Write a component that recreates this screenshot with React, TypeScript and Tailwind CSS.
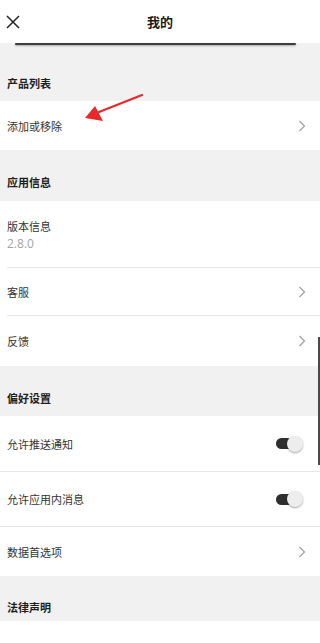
import React from "react";

const font = { fontFamily: '"Noto Sans CJK SC", "Noto Sans", sans-serif' };

function Chevron() {
  return (
    <svg width="8" height="12" viewBox="0 0 8 12" className="mr-[14px]">
      <path d="M1.5 1 L6.5 6 L1.5 11" fill="none" stroke="#9c9c9c" strokeWidth="1.1" />
    </svg>
  );
}

function Toggle() {
  return (
    <div className="relative w-[27px] h-[16px] mr-[17px] flex items-center">
      <div className="w-[18px] h-[11px] rounded-full bg-[#2e2e2e]" />
      <div className="absolute right-0 top-0 w-[16px] h-[16px] rounded-full bg-[#ededed] shadow-[0_1px_2px_rgba(0,0,0,0.35)]" />
    </div>
  );
}

function Section({ title, h, pb }: { title: string; h: string; pb: string }) {
  return (
    <div className={`flex items-end pl-[7px] ${h} ${pb}`}>
      <span className="text-[11px] leading-[12px] font-bold text-[#1e1e1e]">{title}</span>
    </div>
  );
}

function Row({
  label,
  h,
  right,
  divider,
  dividerInset,
}: {
  label: string;
  h: string;
  right?: React.ReactNode;
  divider?: boolean;
  dividerInset?: boolean;
}) {
  return (
    <div className="bg-white">
      <div className={`flex items-center justify-between pl-[7px] ${h}`}>
        <span className="text-[11px] leading-[12px] text-[#333333]">{label}</span>
        {right}
      </div>
      {divider && (
        <div className={`h-px bg-[#e6e6e6] ${dividerInset ? "ml-[7px]" : ""}`} />
      )}
    </div>
  );
}

export default function App() {
  return (
    <div style={font} className="relative w-[320px] h-[643px] overflow-hidden bg-[#f1f1f1]">
      {/* Header */}
      <div className="grid grid-cols-[40px_1fr_40px] items-center h-[43px] bg-white">
        <div className="pl-[6px] flex items-center">
          <svg width="14" height="14" viewBox="0 0 14 14">
            <path d="M1 1 L13 13 M13 1 L1 13" stroke="#222" strokeWidth="1.5" fill="none" />
          </svg>
        </div>
        <div className="text-center text-[13px] font-bold text-[#1a1a1a]">我的</div>
        <div />
      </div>
      <div className="h-[2px] ml-[15px] mr-[24px] bg-[#3e3e3e] rounded-full blur-[0.6px] shadow-[0_1px_2px_rgba(0,0,0,0.3)]" />

      <Section title="产品列表" h="h-[56px]" pb="pb-[12px]" />
      <Row label="添加或移除" h="h-[49px]" right={<Chevron />} />

      <Section title="应用信息" h="h-[51px]" pb="pb-[13px]" />
      <div className="bg-white">
        <div className="flex flex-col justify-center pl-[7px] h-[66px] gap-[5px] pt-[1px]">
          <span className="text-[11px] leading-[12px] text-[#333333]">版本信息</span>
          <span className="text-[12px] leading-[13px] text-[#a3a3a3]" style={{ fontFamily: '"Open Sans", "Noto Sans", sans-serif' }}>2.8.0</span>
        </div>
        <div className="h-px ml-[7px] bg-[#e6e6e6]" />
      </div>
      <Row label="客服" h="h-[47px]" right={<Chevron />} divider dividerInset />
      <Row label="反馈" h="h-[50px]" right={<Chevron />} />

      <Section title="偏好设置" h="h-[50px]" pb="pb-[12px]" />
      <Row label="允许推送通知" h="h-[55px]" right={<Toggle />} divider />
      <Row label="允许应用内消息" h="h-[54px]" right={<Toggle />} divider />
      <Row label="数据首选项" h="h-[49px]" right={<Chevron />} />

      <Section title="法律声明" h="h-[45px]" pb="pb-[8px]" />
      <div className="h-[30px] bg-white" />

      {/* red annotation arrow */}
      <svg className="absolute left-0 top-0" width="320" height="643" viewBox="0 0 320 643">
        <line x1="142" y1="95" x2="99" y2="112" stroke="#e8292b" strokeWidth="2.2" strokeLinecap="round" />
        <polygon points="85,118 95,106 103,121" fill="#e8292b" />
      </svg>

      {/* scroll indicator */}
      <div className="absolute right-0 top-[337px] w-[2px] h-[128px] bg-[#4a4a4a]" />
    </div>
  );
}
